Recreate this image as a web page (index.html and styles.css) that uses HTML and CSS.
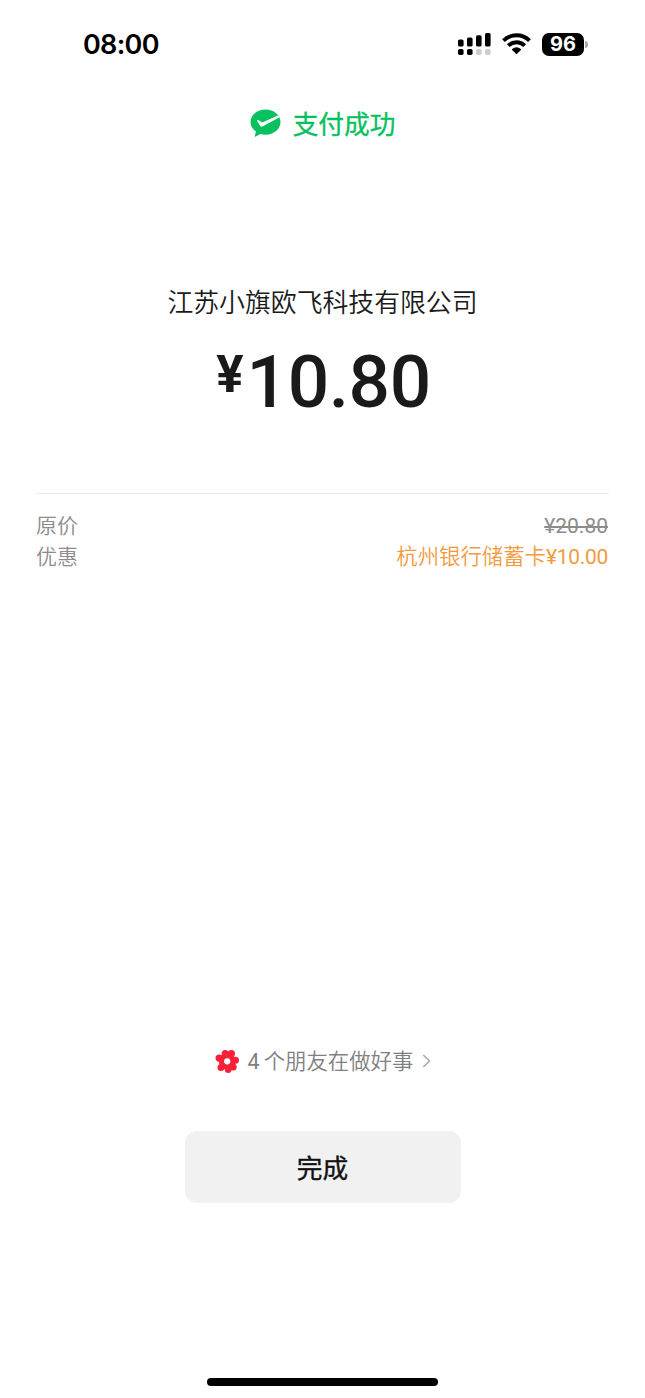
FILE: index.html
```html
<!DOCTYPE html>
<html lang="zh-CN">
<head>
<meta charset="utf-8">
<title>支付成功</title>
<link rel="stylesheet" href="styles.css">
</head>
<body>
<div class="screen">
  <header class="status">
    <div class="time">08:00</div>
    <div class="indicators">
      <svg class="signal" width="33" height="23" viewBox="0 0 33 23">
        <rect x="0" y="6.500" width="5.600" height="7" rx="1.600"/>
        <rect x="9" y="4.500" width="5.600" height="9" rx="1.600"/>
        <rect x="18" y="2.200" width="5.600" height="11.300" rx="1.600"/>
        <rect x="27" y="0" width="5.600" height="13.500" rx="1.600"/>
        <rect x="0" y="16" width="5.600" height="6" rx="1.800"/>
        <rect x="9" y="16" width="5.600" height="6" rx="1.800"/>
        <rect class="dim" x="18" y="16" width="5.600" height="6" rx="1.800"/>
        <rect class="dim" x="27" y="16" width="5.600" height="6" rx="1.800"/>
      </svg>
      <svg class="wifi" width="29" height="22" viewBox="0 0 29 22">
        <path class="arc" d="M1.500 7.700A18.400 18.400 0 0 1 27.500 7.700M6.300 12.600A11.700 11.700 0 0 1 22.700 12.600"/>
        <path d="M14.500 21.300 10.100 17Q9.600 16.400 10.200 15.900Q14.500 12.700 18.800 15.900Q19.400 16.400 18.900 17Z"/>
      </svg>
      <div class="battery"><span class="level">96</span><span class="cap"></span></div>
    </div>
  </header>

  <div class="result">
    <svg class="pay-logo" width="31" height="28" viewBox="0 0 31 28">
      <path class="bubble" d="M15.500.5C7.200.5.5 6 .5 13c0 3.900 2.200 7.300 5.500 9.500L4.800 26.900c-.2.7.3 1 .9.700l4.800-2.500c1.600.4 3.200.6 5 .6 8.300 0 15-5.500 15-12.700C30.500 6 23.800.5 15.500.5Z"/>
      <path class="tick" d="M7.100 11.300Q7.600 10.500 8.400 11L11.700 13.200Q12.300 13.500 13 13.200L28.200 6.300 29.600 8.300 12.900 17.300Q11 18.300 10.200 16.800L7.300 12.400Q7 11.700 7.100 11.300Z"/>
    </svg>
    <span class="result-text">支付成功</span>
  </div>

  <div class="merchant">江苏小旗欧飞科技有限公司</div>
  <div class="amount"><span class="currency">¥</span><span class="value">10.80</span></div>

  <section class="details">
    <div class="row"><span>原价</span><span class="original">¥20.80</span></div>
    <div class="row"><span>优惠</span><span class="discount">杭州银行储蓄卡<span class="sum">¥10.00</span></span></div>
  </section>

  <div class="charity">
    <svg class="flower" width="25" height="25" viewBox="0 0 25 25">
      <g transform="translate(12.200 12.300)">
        <circle r="8.400"/>
        <circle cx="4.100" cy="-7.700" r="3.700"/>
        <circle cx="8.300" cy="-1" r="3.500"/>
        <circle cx="6" cy="5.600" r="3.500"/>
        <circle cx="1" cy="8.300" r="3.400"/>
        <circle cx="-6.200" cy="6.200" r="3.500"/>
        <circle cx="-8" cy="-3.200" r="3.700"/>
        <circle cx="-2" cy="-7.700" r="3.500"/>
        <circle class="core" r="3.100"/>
      </g>
    </svg>
    <span class="charity-text"><span class="count">4</span>个朋友在做好事</span>
    <svg class="chevron" width="9" height="14" viewBox="0 0 9 14"><path d="M1.300 1 7.500 7 1.300 13"/></svg>
  </div>

  <button class="done">完成</button>
  <div class="home-bar"></div>
</div>
</body>
</html>
```
FILE: styles.css
```css
* {
  box-sizing: border-box;
}

body {
  margin: 0;
  background: #fff;
  color: #1a1a1a;
  font-family: Roboto, "Noto Sans CJK SC", sans-serif;
}

.screen {
  display: flex;
  flex-direction: column;
  align-items: center;
  width: 645px;
  height: 1398px;
  overflow: hidden;
}

.status {
  display: flex;
  justify-content: space-between;
  align-items: center;
  width: 100%;
  height: 88px;
  padding: 0 57px 0 83px;
  color: #000;
}

.time {
  padding-top: 2px;
  font: 600 27px/40px Inter, sans-serif;
  letter-spacing: -0.7px;
}

.indicators {
  display: flex;
  align-items: center;
}

.signal .dim {
  fill: #ccc;
}

.wifi {
  margin-left: 11px;
}

.wifi .arc {
  fill: none;
  stroke: #000;
  stroke-width: 3.9;
}

.battery {
  display: flex;
  align-items: center;
  margin-left: 11px;
}

.level {
  width: 42px;
  height: 23px;
  border-radius: 7px;
  background: #000;
  color: #fff;
  font: 700 20px/23px Inter, sans-serif;
  text-align: center;
}

.cap {
  width: 3px;
  height: 7px;
  margin-left: 1px;
  border-radius: 0 3px 3px 0;
  background: #aaa;
}

.result {
  display: flex;
  align-items: center;
  gap: 12px;
  height: 40px;
  margin-top: 15px;
  color: #07c160;
}

.bubble {
  fill: #07c160;
}

.tick {
  fill: #fff;
}

.result-text {
  padding-top: 3px;
  font-size: 25.7px;
  line-height: 40px;
  -webkit-text-stroke: 0.35px currentColor;
}

.merchant {
  margin-top: 140px;
  font-size: 25.85px;
  font-weight: 350;
  line-height: 40px;
}

.amount {
  display: flex;
  align-items: flex-start;
  height: 86px;
  margin-top: 16px;
  padding-left: 2px;
  font-weight: 500;
}

.currency {
  font-size: 51px;
  font-weight: 700;
  line-height: 72px;
}

.value {
  margin-left: 3px;
  font-size: 73px;
  line-height: 86px;
  letter-spacing: -0.4px;
}

.details {
  width: 573px;
  margin-top: 68px;
  padding: 17px 1px 0 0;
  border-top: 1px solid #ececec;
  color: #8c8c8c;
  font-size: 21px;
  font-weight: 350;
  line-height: 31px;
}

.row {
  display: flex;
  justify-content: space-between;
  height: 31px;
}

.original {
  font-weight: 400;
  line-height: 30px;
  text-decoration: line-through;
}

.discount {
  color: #f29b3e;
  font-size: 21.4px;
  line-height: 30px;
}

.sum {
  font-size: 21px;
  font-weight: 400;
  letter-spacing: -0.3px;
}

.charity {
  display: flex;
  align-items: center;
  height: 40px;
  margin-top: 468px;
  padding-left: 1px;
  color: #808080;
}

.flower {
  fill: #fa2037;
}

.flower .core {
  fill: #fff;
}

.charity-text {
  padding-top: 2px;
  margin-left: 8px;
  font-size: 21.4px;
  font-weight: 350;
  line-height: 40px;
}

.count {
  margin-right: 4px;
  font-weight: 400;
}

.chevron {
  margin-left: 9px;
  fill: none;
  stroke: #aaa;
  stroke-width: 1.6;
}

.done {
  width: 276px;
  height: 72px;
  margin-top: 50px;
  padding: 0;
  border: 0;
  border-radius: 12px;
  background: #f1f1f1;
  color: #111;
  font: 400 25.7px/72px "Noto Sans CJK SC", sans-serif;
  -webkit-text-stroke: 0.4px currentColor;
}

.home-bar {
  width: 231px;
  height: 8px;
  margin-top: 175px;
  border-radius: 4px;
  background: #000;
}
```
